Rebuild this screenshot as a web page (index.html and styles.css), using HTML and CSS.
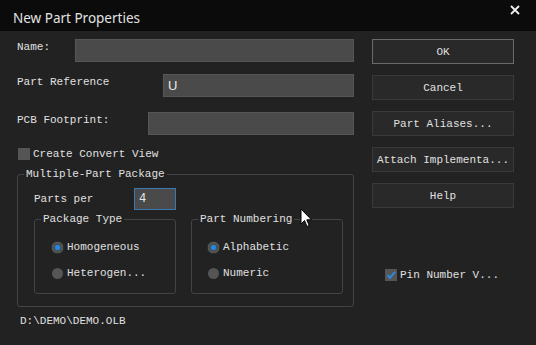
FILE: index.html
```html
<!DOCTYPE html>
<html>
<head>
<meta charset="utf-8">
<link rel="stylesheet" href="styles.css">
</head>
<body>
<div class="dialog">
  <div class="titlebar">
    <span class="title">New Part Properties</span>
    <svg class="close" width="10" height="10" viewBox="0 0 10 10"><path d="M1 1L9 9M9 1L1 9" stroke="#f0f0f0" stroke-width="1.8"/></svg>
  </div>
  <div class="content">
    <div class="left">
      <div class="row r-name"><span class="lbl w-name">Name:</span><span class="input"></span></div>
      <div class="row r-ref"><span class="lbl w-ref">Part Reference</span><span class="input">U</span></div>
      <div class="row r-pcb"><span class="lbl w-pcb">PCB Footprint:</span><span class="input"></span></div>
      <div class="check-row r-conv"><span class="cbox"></span><span class="txt">Create Convert View</span></div>
      <fieldset class="group outer">
        <legend>Multiple-Part Package</legend>
        <div class="row r-parts"><span class="lbl w-parts">Parts per</span><span class="input small">4</span></div>
        <div class="subgroups">
          <fieldset class="group sub pkg">
            <legend>Package Type</legend>
            <div class="radio-row first"><span class="radio on"></span><span class="txt">Homogeneous</span></div>
            <div class="radio-row"><span class="radio"></span><span class="txt">Heterogen...</span></div>
          </fieldset>
          <fieldset class="group sub num">
            <legend>Part Numbering</legend>
            <div class="radio-row first"><span class="radio on"></span><span class="txt">Alphabetic</span></div>
            <div class="radio-row"><span class="radio"></span><span class="txt">Numeric</span></div>
          </fieldset>
        </div>
      </fieldset>
      <div class="path">D:\DEMO\DEMO.OLB</div>
    </div>
    <div class="right">
      <div class="btn default">OK</div>
      <div class="btn">Cancel</div>
      <div class="btn">Part Aliases...</div>
      <div class="btn">Attach Implementa...</div>
      <div class="btn">Help</div>
      <div class="check-row r-pin"><span class="cbox checked"><svg width="12" height="12" viewBox="0 0 12 12"><path d="M2.5 6.2L5 8.8L10 2.8" fill="none" stroke="#2a8ae0" stroke-width="2"/></svg></span><span class="txt">Pin Number V...</span></div>
    </div>
  </div>
  <svg class="cursor" width="13" height="20" viewBox="0 0 13 20"><path d="M1 1L1 16L4.5 12.5L7 18.5L9.2 17.5L6.8 11.8L11.5 11.8Z" fill="#fff" stroke="#000" stroke-width="1"/></svg>
</div>
</body>
</html>
```
FILE: styles.css
```css
html, body {
  margin: 0;
  padding: 0;
  background: #222222;
}
.dialog {
  position: relative;
  width: 536px;
  height: 345px;
  background: #222222;
  overflow: hidden;
  font-family: "Liberation Mono", "DejaVu Sans Mono", monospace;
  font-size: 11px;
  color: #e0e0e0;
}
.titlebar {
  height: 31px;
  background: #0b0b0b;
  display: flex;
  align-items: center;
  justify-content: space-between;
  padding: 0 16px 0 13px;
}
.title {
  font-family: "Noto Sans", "Liberation Sans", sans-serif;
  font-size: 13.5px;
  color: #e2e2e2;
  margin-top: 4px;
}
.close {
  margin-top: -11px;
}
.content {
  display: flex;
  padding-left: 17px;
}
.left {
  width: 337px;
  display: flex;
  flex-direction: column;
}
.row {
  display: flex;
  align-items: center;
  height: 23px;
}
.lbl {
  flex: none;
}
.w-name { width: 58px; }
.w-ref { width: 146px; }
.w-pcb { width: 131px; }
.w-parts { width: 100px; padding-left: 16px; }
.r-name { margin-top: 8px; }
.r-name .lbl { margin-top: -7px; }
.r-ref { margin-top: 12px; }
.r-ref .lbl { margin-top: -8px; }
.r-pcb { margin-top: 15px; }
.r-pcb .lbl { margin-top: -8px; }
.input {
  flex: 1;
  box-sizing: border-box;
  height: 23px;
  background: #4a4a4a;
  border: 1px solid #565656;
  display: flex;
  align-items: center;
  padding-left: 4px;
  font-family: "Liberation Sans", sans-serif;
  font-size: 13px;
  color: #e8e8e8;
}
.input.small {
  flex: none;
  width: 42px;
  height: 22px;
  border: 1px solid #3c78b4;
  font-family: "Liberation Mono", monospace;
  font-size: 12px;
}
.check-row {
  display: flex;
  align-items: center;
  height: 14px;
}
.r-conv { margin-top: 12px; margin-left: 1px; }
.cbox {
  width: 12px;
  height: 12px;
  background: #555555;
  flex: none;
  margin-right: 3px;
  display: flex;
}
.group {
  border: 1px solid #434343;
  border-radius: 3px;
  margin: 0;
  padding: 0;
  min-width: 0;
}
.group legend {
  padding: 0 2px;
  margin-left: 6px;
  line-height: 13px;
}
.outer {
  margin-top: 7px;
  height: 139px;
  box-sizing: border-box;
}
.r-parts { margin-top: 7px; height: 22px; }
.subgroups {
  display: flex;
  margin-top: 3px;
  padding-left: 16px;
  gap: 15px;
}
.sub {
  height: 81px;
  box-sizing: border-box;
}
.pkg { width: 142px; }
.num { width: 152px; }
.sub legend { margin-left: 6px; }
.radio-row {
  display: flex;
  align-items: center;
  height: 14px;
  margin-top: 12px;
}
.radio-row.first { margin-top: 14px; }
.pkg .radio-row { padding-left: 17px; }
.num .radio-row { padding-left: 16px; }
.radio {
  width: 11px;
  height: 11px;
  border-radius: 50%;
  background: #555555;
  margin-right: 4px;
  box-sizing: border-box;
  flex: none;
}
.radio.on {
  background: #1a8cf0;
  border: 3px solid #505050;
  box-shadow: 0 0 1px #7aa;
}
.path {
  margin-top: 8px;
  margin-left: 3px;
}
.right {
  width: 142px;
  margin-left: 18px;
  display: flex;
  flex-direction: column;
  gap: 11px;
  padding-top: 8px;
}
.btn {
  height: 25px;
  box-sizing: border-box;
  border: 1px solid #3a3a3a;
  background: #292929;
  display: flex;
  align-items: center;
  justify-content: center;
  white-space: nowrap;
}
.btn.default { border-color: #6a6a6a; }
.r-pin {
  margin-top: 49px;
  margin-left: 13px;
}
.cursor {
  position: absolute;
  left: 300px;
  top: 208px;
}
```
